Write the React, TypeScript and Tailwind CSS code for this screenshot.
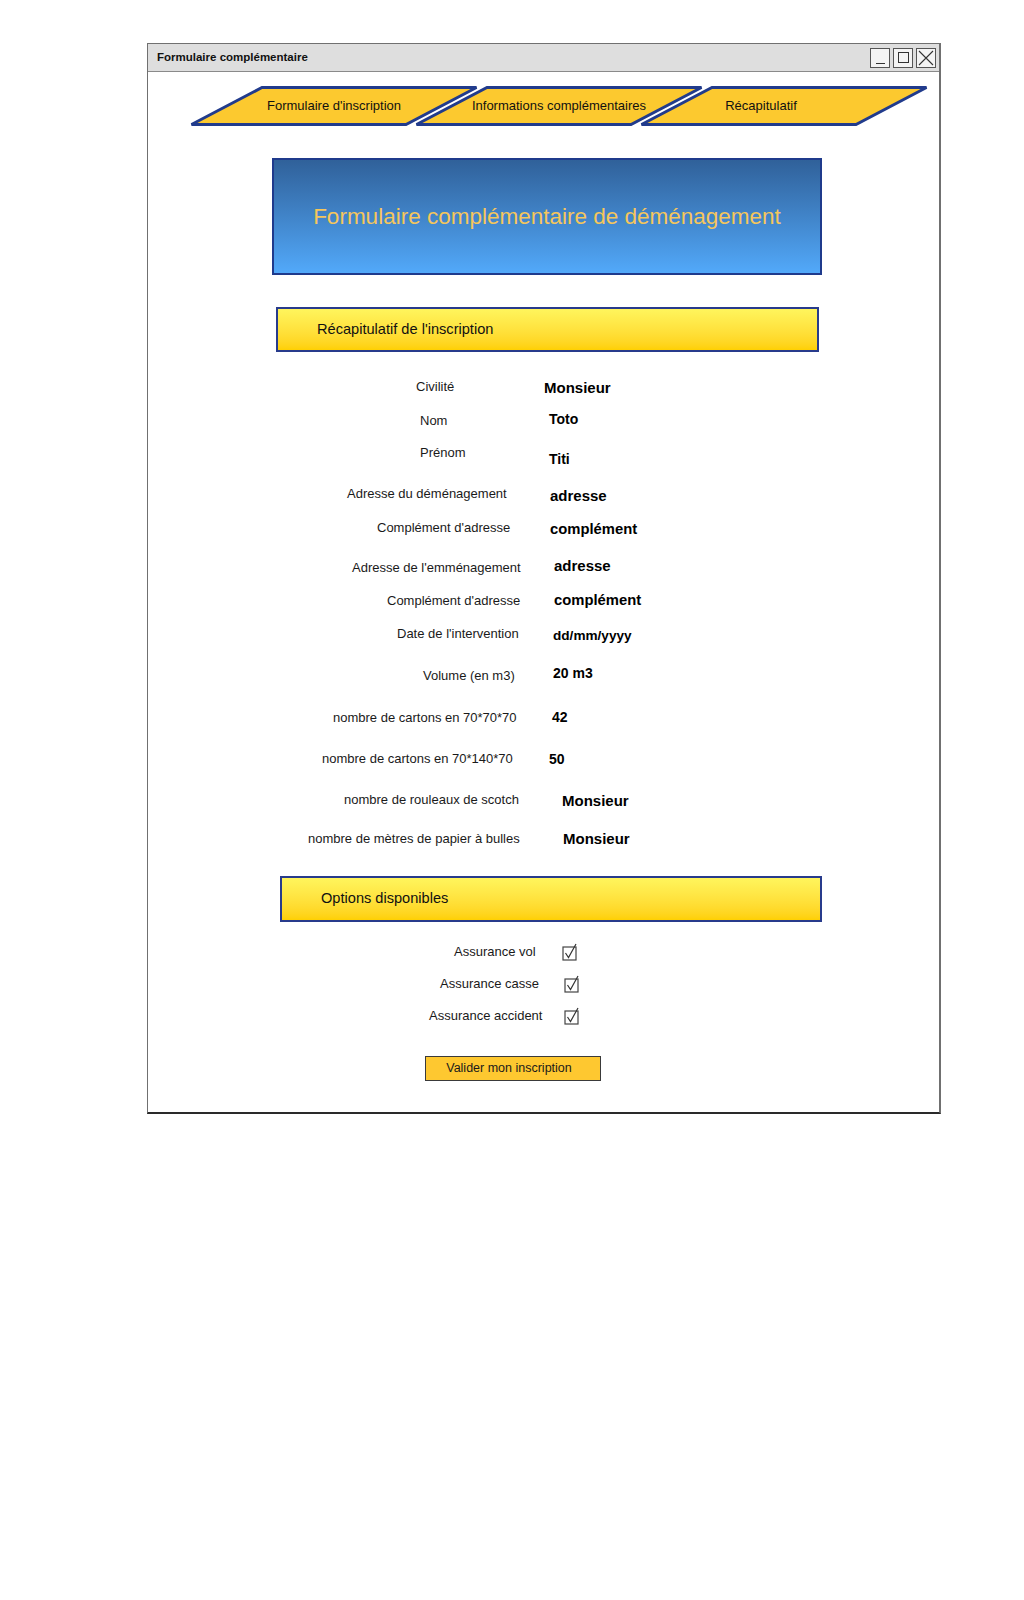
import React from "react";

interface TabProps {
  label: string;
  className?: string;
  textClass?: string;
}

const Tab: React.FC<TabProps> = ({ label, className, textClass }) => (
  <div className={`relative h-[40px] w-[288px] shrink-0 ${className ?? ""}`}>
    <svg
      className="absolute inset-0"
      width="288"
      height="40"
      viewBox="0 0 288 40"
    >
      <polygon
        points="1.5,38.5 72,1.5 286.5,1.5 216,38.5"
        fill="#fcc92f"
        stroke="#213b8c"
        strokeWidth="3"
      />
    </svg>
    <span
      className={`relative flex h-full items-center justify-center text-[13px] text-[#111] ${textClass ?? ""}`}
    >
      {label}
    </span>
  </div>
);

interface RowProps {
  label: string;
  value: string;
  rowClass: string;
  labelClass: string;
  valueClass: string;
}

// one line of the summary: label box runs up to where the value starts
const Row: React.FC<RowProps> = ({
  label,
  value,
  rowClass,
  labelClass,
  valueClass,
}) => (
  <div className={`flex items-start ${rowClass}`}>
    <span
      className={`shrink-0 whitespace-nowrap text-[13px] leading-[16px] text-[#1a1a1a] ${labelClass}`}
    >
      {label}
    </span>
    <span className={`whitespace-nowrap font-bold text-black ${valueClass}`}>
      {value}
    </span>
  </div>
);

const CheckBox = () => (
  <svg width="18" height="18" viewBox="0 0 18 18" className="-mt-[1px] shrink-0">
    <rect x="1" y="4" width="13" height="13" fill="#fff" stroke="#444" strokeWidth="1.2" />
    <path
      d="M3.5 10 L6.5 14.5 L14 1"
      fill="none"
      stroke="#333"
      strokeWidth="1.2"
    />
  </svg>
);

interface OptionProps {
  label: string;
  rowClass: string;
  labelClass: string;
}

const Option: React.FC<OptionProps> = ({ label, rowClass, labelClass }) => (
  <div className={`flex items-start ${rowClass}`}>
    <span
      className={`shrink-0 whitespace-nowrap text-[13px] leading-[16px] text-[#1a1a1a] ${labelClass}`}
    >
      {label}
    </span>
    <CheckBox />
  </div>
);

export default function App() {
  return (
    <div className="min-h-[1600px] bg-white pt-[43px] pl-[147px] font-['Liberation_Sans',Arial,sans-serif]">
      <div className="flex h-[1071px] w-[794px] flex-col border border-r-2 border-b-2 border-[#707070] border-b-[#2a2a2a] bg-white">
        {/* title bar */}
        <div className="flex h-[28px] shrink-0 items-center justify-between border-b border-[#8a8a8a] bg-[#dedede] pl-[9px] pr-[3px]">
          <span className="text-[11.5px] font-bold text-[#111]">
            Formulaire complémentaire
          </span>
          <div className="flex gap-[3px]">
            <div className="flex h-[20px] w-[20px] items-end justify-center border border-[#555] bg-[#f4f4f4] pb-[3px]">
              <div className="h-px w-[9px] bg-[#333]" />
            </div>
            <div className="flex h-[20px] w-[20px] items-center justify-center border border-[#555] bg-[#f4f4f4]">
              <div className="h-[11px] w-[11px] border border-[#333]" />
            </div>
            <div className="flex h-[20px] w-[20px] items-center justify-center border border-[#555] bg-[#f4f4f4]">
              <svg width="16" height="16" viewBox="0 0 16 16">
                <path d="M1 1 L15 15 M15 1 L1 15" stroke="#333" strokeWidth="1.1" />
              </svg>
            </div>
          </div>
        </div>

        {/* step tabs */}
        <div className="mt-[14px] ml-[42px] flex">
          <Tab label="Formulaire d'inscription" />
          <Tab label="Informations complémentaires" className="-ml-[63px]" />
          <Tab label="Récapitulatif" className="-ml-[63px]" textClass="pr-[46px]" />
        </div>

        {/* header */}
        <div className="mt-[32px] ml-[124px] flex h-[117px] w-[550px] items-center justify-center border-2 border-[#1f3a8c] bg-gradient-to-b from-[#30619a] to-[#52a9fa]">
          <span className="text-[22.5px] text-[#f5c65c]">
            Formulaire complémentaire de déménagement
          </span>
        </div>

        <div className="mt-[32px] ml-[128px] flex h-[45px] w-[543px] items-center border-2 border-[#283b8c] bg-gradient-to-b from-[#fff55c] to-[#ffd000] pl-[39px]">
          <span className="text-[14.6px] text-[#111]">
            Récapitulatif de l'inscription
          </span>
        </div>

        {/* summary */}
        <div className="mt-[27px] flex flex-col">
          <Row label="Civilité" value="Monsieur" rowClass="h-[32px]" labelClass="ml-[268px] w-[128px]" valueClass="text-[15px] leading-[18px]" />
          <Row label="Nom" value="Toto" rowClass="h-[34px]" labelClass="ml-[272px] w-[129px] mt-[2px]" valueClass="text-[14px] leading-[17px]" />
          <Row label="Prénom" value="Titi" rowClass="h-[41px]" labelClass="ml-[272px] w-[129px]" valueClass="text-[14px] leading-[17px] mt-[6px]" />
          <Row label="Adresse du déménagement" value="adresse" rowClass="h-[34px]" labelClass="ml-[199px] w-[203px]" valueClass="text-[15px] leading-[18px] mt-[1px]" />
          <Row label="Complément d'adresse" value="complément" rowClass="h-[37px]" labelClass="ml-[229px] w-[173px]" valueClass="text-[14.8px] leading-[18px]" />
          <Row label="Adresse de l'emménagement" value="adresse" rowClass="h-[34px]" labelClass="ml-[204px] w-[202px] mt-[3px]" valueClass="text-[15px] leading-[18px]" />
          <Row label="Complément d'adresse" value="complément" rowClass="h-[35px]" labelClass="ml-[239px] w-[167px] mt-[2px]" valueClass="text-[14.8px] leading-[18px]" />
          <Row label="Date de l'intervention" value="dd/mm/yyyy" rowClass="h-[39px]" labelClass="ml-[249px] w-[156px]" valueClass="text-[13.6px] leading-[17px] mt-[1px]" />
          <Row label="Volume (en m3)" value="20 m3" rowClass="h-[44px]" labelClass="ml-[275px] w-[130px] mt-[3px]" valueClass="text-[14px] leading-[17px]" />
          <Row label="nombre de cartons en 70*70*70" value="42" rowClass="h-[42px]" labelClass="ml-[185px] w-[219px] mt-[1px]" valueClass="text-[14px] leading-[17px]" />
          <Row label="nombre de cartons en 70*140*70" value="50" rowClass="h-[41px]" labelClass="ml-[174px] w-[227px]" valueClass="text-[14px] leading-[17px]" />
          <Row label="nombre de rouleaux de scotch" value="Monsieur" rowClass="h-[38px]" labelClass="ml-[196px] w-[218px]" valueClass="text-[15px] leading-[18px]" />
          <Row label="nombre de mètres de papier à bulles" value="Monsieur" rowClass="h-[46px]" labelClass="ml-[160px] w-[255px] mt-[1px]" valueClass="text-[15px] leading-[18px]" />
        </div>

        <div className="ml-[132px] flex h-[46px] w-[542px] items-center border-2 border-[#283b8c] bg-gradient-to-b from-[#fff55c] to-[#ffd000] pl-[39px]">
          <span className="text-[14.6px] text-[#111]">Options disponibles</span>
        </div>

        {/* options */}
        <div className="mt-[22px] flex flex-col">
          <Option label="Assurance vol" rowClass="h-[32px]" labelClass="ml-[306px] w-[108px]" />
          <Option label="Assurance casse" rowClass="h-[32px]" labelClass="ml-[292px] w-[124px]" />
          <Option label="Assurance accident" rowClass="h-[48px]" labelClass="ml-[281px] w-[135px]" />
        </div>

        <button className="ml-[277px] flex h-[25px] w-[176px] items-center justify-center border border-[#3a3a3a] bg-[#fec830] pr-[8px] text-[12.5px] text-[#1a1a1a]">
          Valider mon inscription
        </button>
      </div>
    </div>
  );
}
